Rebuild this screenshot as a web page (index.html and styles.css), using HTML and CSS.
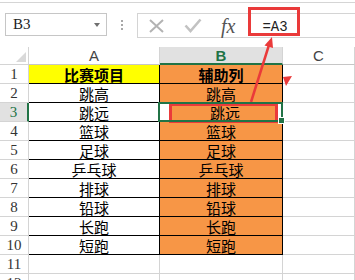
FILE: index.html
```html
<!DOCTYPE html>
<html lang="zh-CN">
<head>
    <meta charset="UTF-8">
    <title>辅助列</title>
    <link rel="stylesheet" href="styles.css">
</head>
<body>
    <div class="top-edge"></div>

    <!-- 名称框 + 编辑栏 -->
    <div class="formula-bar">
        <div class="name-box"><span>B3</span><i class="caret"></i></div>
        <div class="dots"><i></i><i></i><i></i></div>
        <div class="formula">
            <svg class="icon-x" width="15" height="14" viewBox="0 0 15 14">
                <path d="M1 1 L14 13 M14 1 L1 13" stroke="#b3b3b3" stroke-width="2" fill="none"/>
            </svg>
            <svg class="icon-ok" width="18" height="15" viewBox="0 0 18 15">
                <path d="M1.5 7.5 L6.5 13 L16.5 1.5" stroke="#c2c2c2" stroke-width="2.6" fill="none"/>
            </svg>
            <span class="fx">fx</span>
            <span class="formula-text">=A3</span>
        </div>
        <div class="formula-mark"></div>
    </div>

    <!-- 工作表 -->
    <div class="sheet">
        <div class="corner"><i></i></div>
        <div class="col-head">A</div>
        <div class="col-head active">B</div>
        <div class="col-head">C</div>

        <div class="row-head">1</div>
        <div class="cell yellow bold">比赛项目</div>
        <div class="cell orange bold">辅助列</div>
        <div class="blank"></div>

        <div class="row-head">2</div>
        <div class="cell">跳高</div>
        <div class="cell orange">跳高</div>
        <div class="blank"></div>

        <div class="row-head active">3</div>
        <div class="cell">跳远</div>
        <div class="cell selected"><span class="mark">跳远</span></div>
        <div class="blank"></div>

        <div class="row-head">4</div>
        <div class="cell">篮球</div>
        <div class="cell orange">篮球</div>
        <div class="blank"></div>

        <div class="row-head">5</div>
        <div class="cell">足球</div>
        <div class="cell orange">足球</div>
        <div class="blank"></div>

        <div class="row-head">6</div>
        <div class="cell">乒乓球</div>
        <div class="cell orange">乒乓球</div>
        <div class="blank"></div>

        <div class="row-head">7</div>
        <div class="cell">排球</div>
        <div class="cell orange">排球</div>
        <div class="blank"></div>

        <div class="row-head">8</div>
        <div class="cell">铅球</div>
        <div class="cell orange">铅球</div>
        <div class="blank"></div>

        <div class="row-head">9</div>
        <div class="cell">长跑</div>
        <div class="cell orange">长跑</div>
        <div class="blank"></div>

        <div class="row-head">10</div>
        <div class="cell">短跑</div>
        <div class="cell orange">短跑</div>
        <div class="blank"></div>

        <div class="row-head">11</div>
        <div class="blank"></div>
        <div class="blank"></div>
        <div class="blank"></div>

        <div class="row-head">12</div>
        <div class="blank"></div>
        <div class="blank"></div>
        <div class="blank"></div>
    </div>

    <!-- 标注箭头 -->
    <svg class="annotation" width="355" height="280" viewBox="0 0 355 280">
        <line x1="251" y1="102" x2="269" y2="45" stroke="#ea3a3a" stroke-width="2.5"/>
        <polygon points="272,37 273,48 264.5,45.5" fill="#ea3a3a"/>
        <polygon points="283,77 292,76 286,86" fill="#ea3a3a"/>
    </svg>
</body>
</html>
```

FILE: styles.css
```css
/* 页面 */
html, body {
    margin: 0;
    height: 280px;
    overflow: hidden;
    background: #fff;
}
body {
    position: relative;
    width: 355px;
    font-family: "Liberation Sans", "Noto Sans CJK SC", sans-serif;
    color: #000;
}

/* 顶部分隔线 */
.top-edge { height: 2px; border-bottom: 1px solid #d5d5d5; }

/* 编辑栏 */
.formula-bar {
    position: relative;
    display: flex;
    margin-top: 10px;
    height: 25px;
}
.name-box {
    margin-left: 5px;
    width: 102px;
    height: 23px;
    box-sizing: border-box;
    border: 1px solid #c6c6c6;
    display: flex;
    align-items: center;
    justify-content: space-between;
    padding: 0 6px 0 7px;
    font: 15px "Liberation Serif", serif;
    color: #222;
}
.caret {
    width: 0;
    height: 0;
    border-left: 3.5px solid transparent;
    border-right: 3.5px solid transparent;
    border-top: 4px solid #707070;
}
.dots {
    width: 30px;
    height: 23px;
    display: flex;
    flex-direction: column;
    align-items: center;
    justify-content: center;
    gap: 2px;
}
.dots i { width: 2px; height: 2px; background: #a8a8a8; }

.formula {
    flex: 1;
    box-sizing: border-box;
    border: 1px solid #d4d4d4;
    border-right: 0;
    display: flex;
    align-items: center;
}
.icon-x { margin-left: 11px; }
.icon-ok { margin-left: 20px; }
.fx {
    margin-left: 19px;
    font: italic 20px "Liberation Serif", serif;
    color: #555;
    line-height: 1;
}
.formula-text {
    margin-left: 27px;
    padding-top: 3px;
    font: 14px "Liberation Mono", monospace;
    color: #222;
}
.formula-mark {
    position: absolute;
    left: 248px;
    top: -6px;
    width: 52px;
    height: 29px;
    box-sizing: border-box;
    border: 3px solid #ea3a3a;
}

/* 工作表网格 */
.sheet {
    display: grid;
    grid-template-columns: 29px 131px 123px 72px;
    grid-template-rows: 18px repeat(12, 19px);
    margin-top: 9px;
}
.sheet > div {
    box-sizing: border-box;
    border-right: 1px solid #d4d4d4;
    border-bottom: 1px solid #d4d4d4;
    display: flex;
    align-items: center;
    justify-content: center;
}

.corner {
    justify-content: flex-end !important;
    align-items: flex-end !important;
    padding: 0 2px 2px 0;
}
.corner i {
    width: 0;
    height: 0;
    border-left: 10px solid transparent;
    border-bottom: 10px solid #d9d9d9;
}

.col-head {
    font-size: 15px;
    color: #444;
    border-bottom-color: #c6c6c6 !important;
}
.col-head.active {
    background: #e1e1e1;
    color: #217346;
    font-weight: bold;
    border-bottom: 2px solid #217346 !important;
}

.row-head {
    font: 15px "Liberation Serif", serif;
    color: #333;
}
.row-head.active {
    background: #e1e1e1;
    color: #217346;
    border-right: 2px solid #217346 !important;
}

/* 数据单元格 */
.cell {
    font: 15px "Noto Sans CJK SC", sans-serif;
    border-right-color: #000 !important;
    border-bottom-color: #000 !important;
}
.cell.bold { font-weight: bold; }
.yellow { background: #ffff00; }
.orange { background: #f79646; }

/* 选中单元格 B3 */
.cell.selected {
    position: relative;
    align-items: flex-start;
    justify-content: flex-start;
}
.cell.selected::after {
    content: "";
    position: absolute;
    top: -1px;
    left: -2px;
    right: -1px;
    bottom: -1px;
    border: 2px solid #217346;
    z-index: 2;
}
.cell.selected::before {
    content: "";
    position: absolute;
    right: -3px;
    bottom: -3px;
    width: 5px;
    height: 5px;
    background: #217346;
    border: 1px solid #fff;
    z-index: 3;
}
.mark {
    position: relative;
    z-index: 1;
    display: flex;
    align-items: center;
    justify-content: center;
    box-sizing: border-box;
    margin-left: 9px;
    width: 109px;
    height: 20px;
    border: 3px solid #ea3a3a;
    background: #f79646;
    font-size: 15px;
    line-height: 14px;
    padding-left: 3px;
}

/* 标注层 */
.annotation {
    position: absolute;
    left: 0;
    top: 0;
    pointer-events: none;
}
```
